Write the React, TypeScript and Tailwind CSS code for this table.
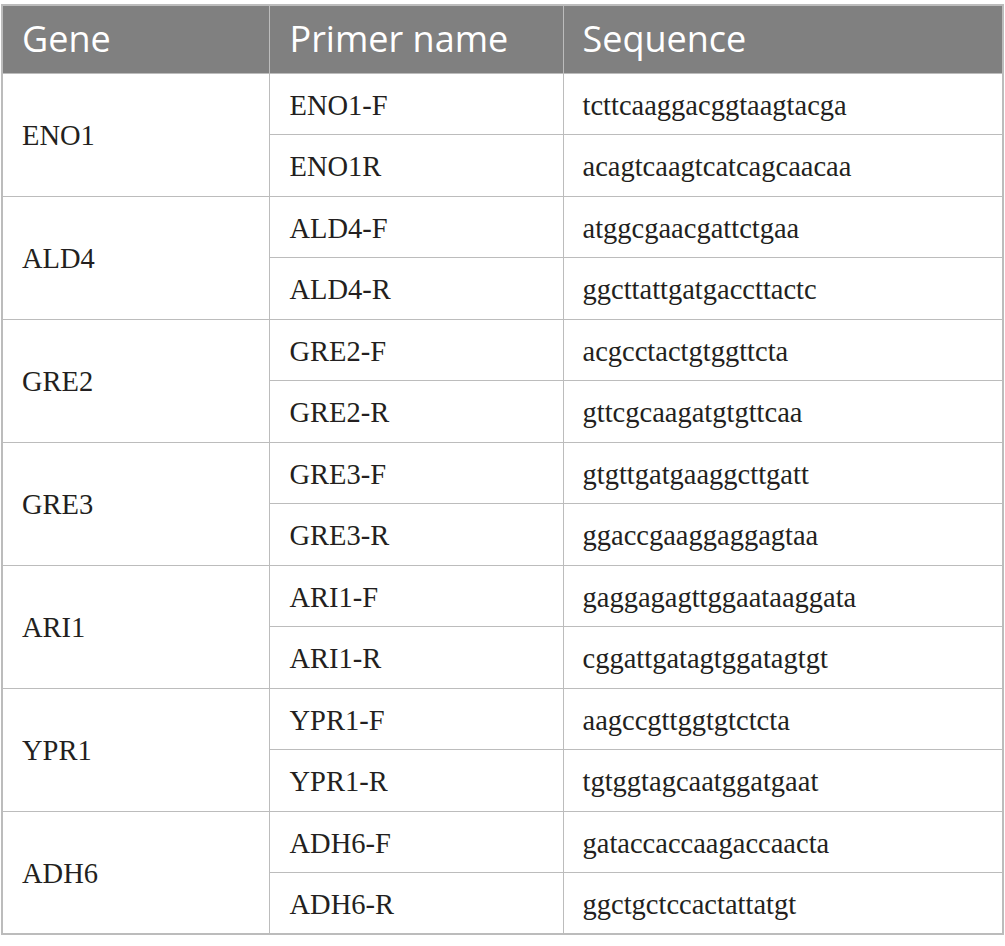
const rows: [string, [string, string][]][] = [
  ['ENO1', [['ENO1-F', 'tcttcaaggacggtaagtacga'], ['ENO1R', 'acagtcaagtcatcagcaacaa']]],
  ['ALD4', [['ALD4-F', 'atggcgaacgattctgaa'], ['ALD4-R', 'ggcttattgatgaccttactc']]],
  ['GRE2', [['GRE2-F', 'acgcctactgtggttcta'], ['GRE2-R', 'gttcgcaagatgtgttcaa']]],
  ['GRE3', [['GRE3-F', 'gtgttgatgaaggcttgatt'], ['GRE3-R', 'ggaccgaaggaggagtaa']]],
  ['ARI1', [['ARI1-F', 'gaggagagttggaataaggata'], ['ARI1-R', 'cggattgatagtggatagtgt']]],
  ['YPR1', [['YPR1-F', 'aagccgttggtgtctcta'], ['YPR1-R', 'tgtggtagcaatggatgaat']]],
  ['ADH6', [['ADH6-F', 'gataccaccaagaccaacta'], ['ADH6-R', 'ggctgctccactattatgt']]],
];

export default function App() {
  return (
    <div className="bg-white w-[1005px] h-[946px] pt-[4px] pl-[1px]">
      <table className="w-[1003px] border-collapse border-2 border-[#bcbcbc] table-fixed">
        <colgroup>
          <col className="w-[267px]" />
          <col className="w-[294px]" />
          <col />
        </colgroup>
        <thead>
          <tr className="bg-[#808080] h-[68px] text-white text-[36px] font-['Open_Sans',sans-serif] text-left">
            <th className="font-normal pl-[19px] border border-[#bcbcbc] leading-none">Gene</th>
            <th className="font-normal pl-[20px] border border-[#bcbcbc] leading-none">Primer name</th>
            <th className="font-normal pl-[19px] border border-[#bcbcbc] leading-none">Sequence</th>
          </tr>
        </thead>
        <tbody className="text-[28.5px] text-[#231f20] font-['Liberation_Serif',serif]">
          {rows.map(([gene, primers]) =>
            primers.map(([name, seq], i) => (
              <tr key={name} className="h-[61.5px]">
                {i === 0 && (
                  <td rowSpan={2} className="pl-[19px] border border-[#bcbcbc] pt-[4px] leading-none">
                    {gene}
                  </td>
                )}
                <td className="pl-[20px] border border-[#bcbcbc] pt-[4px] leading-none">{name}</td>
                <td className="pl-[19px] border border-[#bcbcbc] pt-[4px] leading-none">{seq}</td>
              </tr>
            ))
          )}
        </tbody>
      </table>
    </div>
  );
}
